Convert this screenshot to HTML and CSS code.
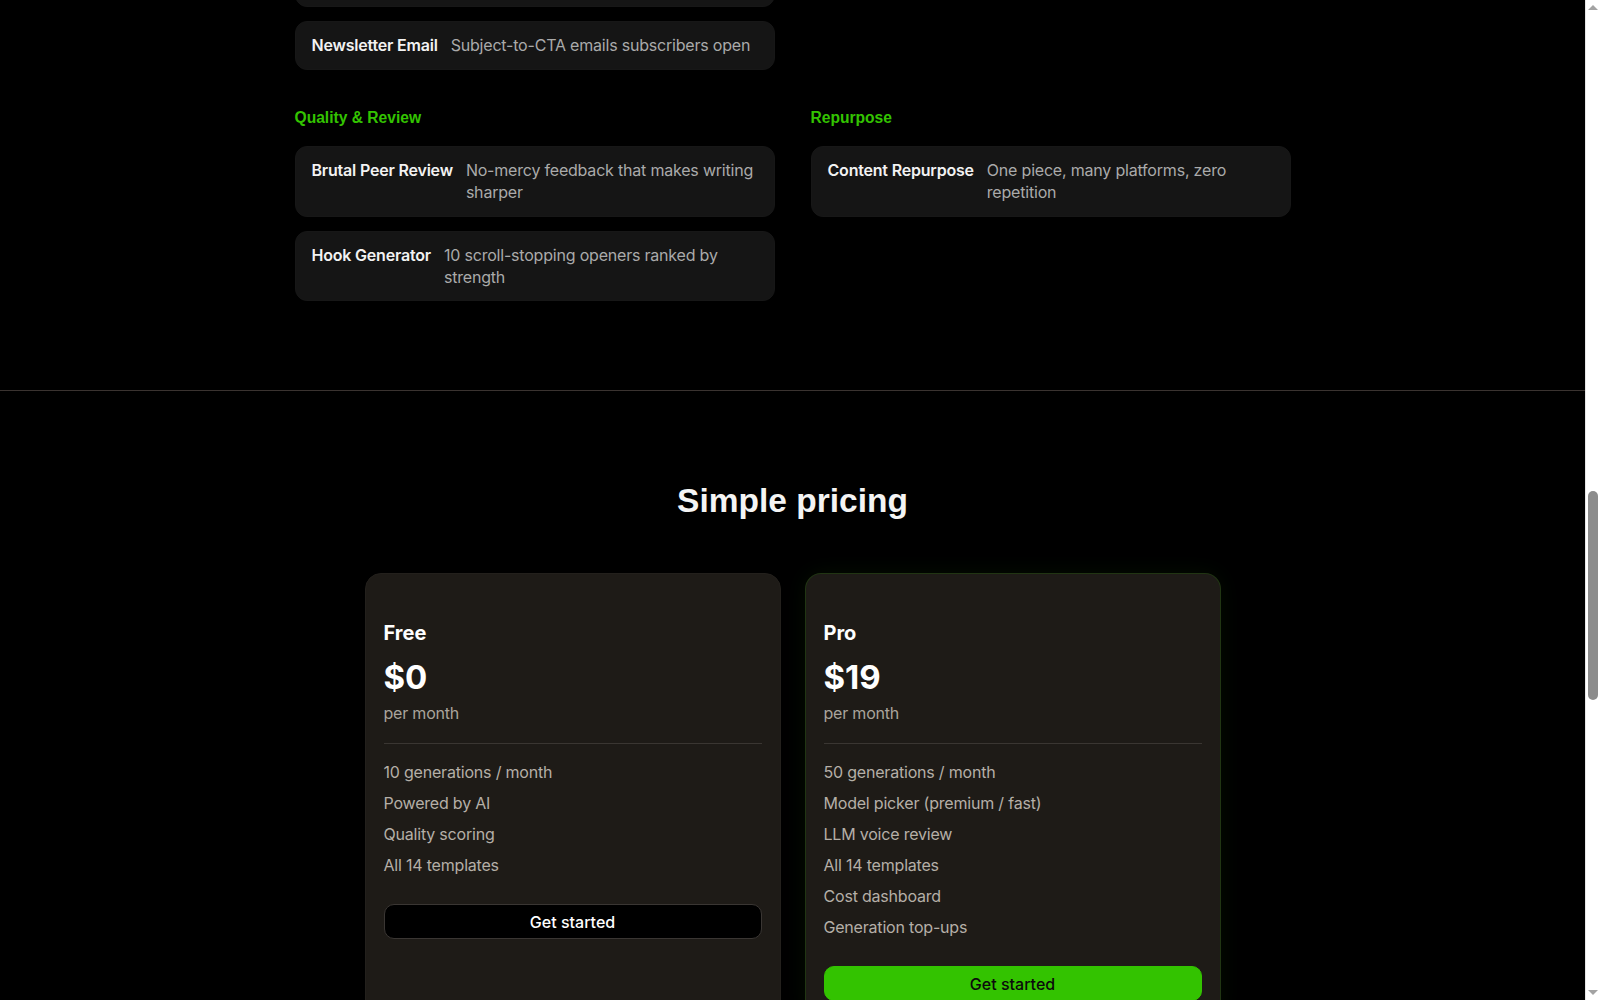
FILE: index.html
```html
<!DOCTYPE html>
<html lang="en">
<head>
<meta charset="utf-8">
<title>Templates and pricing</title>
<link rel="stylesheet" href="styles.css">
</head>
<body>
<section class="templates">
  <div class="groups">
    <div class="group">
      <div class="cards">
        <div class="card card-cut"><span class="card-title">&nbsp;</span></div>
        <div class="card">
          <span class="card-title">Newsletter Email</span>
          <span class="card-desc">Subject-to-CTA emails subscribers open</span>
        </div>
      </div>
    </div>
    <div class="group"></div>
    <div class="group">
      <h3 class="group-title">Quality &amp; Review</h3>
      <div class="cards">
        <div class="card">
          <span class="card-title">Brutal Peer Review</span>
          <span class="card-desc">No-mercy feedback that makes writing sharper</span>
        </div>
        <div class="card">
          <span class="card-title">Hook Generator</span>
          <span class="card-desc">10 scroll-stopping openers ranked by strength</span>
        </div>
      </div>
    </div>
    <div class="group">
      <h3 class="group-title">Repurpose</h3>
      <div class="cards">
        <div class="card">
          <span class="card-title">Content Repurpose</span>
          <span class="card-desc">One piece, many platforms, zero repetition</span>
        </div>
      </div>
    </div>
  </div>
</section>

<section class="pricing">
  <h2 class="pricing-title">Simple pricing</h2>
  <div class="plans">
    <div class="plan">
      <div class="plan-name">Free</div>
      <div class="plan-price">$0</div>
      <div class="plan-period">per month</div>
      <hr class="plan-rule">
      <ul class="plan-features">
        <li>10 generations / month</li>
        <li>Powered by AI</li>
        <li>Quality scoring</li>
        <li>All 14 templates</li>
      </ul>
      <a class="btn btn-dark" href="#">Get started</a>
    </div>
    <div class="plan plan-pro">
      <div class="plan-name">Pro</div>
      <div class="plan-price">$19</div>
      <div class="plan-period">per month</div>
      <hr class="plan-rule">
      <ul class="plan-features">
        <li>50 generations / month</li>
        <li>Model picker (premium / fast)</li>
        <li>LLM voice review</li>
        <li>All 14 templates</li>
        <li>Cost dashboard</li>
        <li>Generation top-ups</li>
      </ul>
      <a class="btn btn-green" href="#">Get started</a>
    </div>
  </div>
</section>

<div class="scrollbar" aria-hidden="true">
  <span class="sb-arrow sb-up"></span>
  <span class="sb-thumb"></span>
  <span class="sb-arrow sb-down"></span>
</div>
</body>
</html>
```

FILE: styles.css
```css
* { box-sizing: border-box; }

html, body {
  margin: 0;
  padding: 0;
  background: #000;
}

body {
  padding-right: 15px;
  font-family: Inter, "Noto Sans", "Liberation Sans", sans-serif;
  color: #f2f2f2;
}

/* ---------- templates ---------- */
.templates {
  padding: 0 0 89px;
}

.groups {
  width: 996px;
  margin: -41px auto 0;
  display: grid;
  grid-template-columns: 480px 480px;
  column-gap: 36px;
  row-gap: 36px;
}

.group-title {
  margin: 0 0 16px;
  font-family: "Liberation Sans", Arial, sans-serif;
  font-size: 15.6px;
  font-weight: 700;
  line-height: 24px;
  color: #33c300;
}

.cards {
  display: flex;
  flex-direction: column;
  gap: 14px;
}

.card {
  display: flex;
  align-items: flex-start;
  gap: 13px;
  padding: 12px 16px;
  background: #151515;
  border: 1px solid #171717;
  border-radius: 12px;
  font-size: 16px;
  line-height: 22.4px;
  letter-spacing: -0.2px;
}

.card-title {
  flex-shrink: 0;
  font-weight: 600;
  color: #f2f2f2;
}

.card-desc {
  color: #aaaaaa;
}

/* ---------- pricing ---------- */
.pricing {
  border-top: 1px solid #3a3330;
  padding: 91px 0 90px;
}

.pricing-title {
  margin: 0 0 53px;
  text-align: center;
  font-family: "Liberation Sans", Arial, sans-serif;
  font-size: 33.5px;
  font-weight: 700;
  line-height: 38px;
  color: #f4f4f4;
}

.plans {
  width: 856px;
  margin: 0 auto;
  display: grid;
  grid-template-columns: 416px 416px;
  column-gap: 24px;
}

.plan {
  display: flex;
  flex-direction: column;
  padding: 45px 18px 18px;
  background: #1e1b17;
  border: 1px solid #23201c;
  border-radius: 16px;
}

.plan-pro {
  border-color: rgba(51, 195, 0, 0.16);
  box-shadow: 0 0 22px rgba(51, 195, 0, 0.07);
}

.plan-name {
  font-size: 20px;
  font-weight: 700;
  line-height: 28px;
  color: #ffffff;
  margin-bottom: 11px;
}

.plan-price {
  font-size: 33px;
  font-weight: 700;
  line-height: 38px;
  color: #ffffff;
  margin-bottom: 5px;
}

.plan-period {
  font-size: 16px;
  line-height: 24px;
  letter-spacing: -0.2px;
  color: #aaa49c;
}

.plan-rule {
  margin: 18px 0 0;
  border: 0;
  height: 1px;
  background: #3a3632;
}

.plan-features {
  list-style: none;
  margin: 16px 0 0;
  padding: 0;
  display: flex;
  flex-direction: column;
  gap: 7px;
  font-size: 16px;
  line-height: 24px;
  letter-spacing: -0.2px;
  color: #b5afa7;
}

.btn {
  display: flex;
  align-items: center;
  justify-content: center;
  height: 35px;
  margin-top: 27px;
  border-radius: 10px;
  font-size: 16px;
  font-weight: 500;
  text-decoration: none;
}

.btn-dark {
  background: #000;
  border: 1px solid #3a3633;
  color: #ffffff;
}

.btn-green {
  background: #33c300;
  border: 1px solid #33c300;
  color: #0b0b0b;
}

/* ---------- window scrollbar ---------- */
.scrollbar {
  position: fixed;
  top: 0;
  right: 0;
  width: 15px;
  height: 100vh;
  background: #ffffff;
  border-left: 1px solid #e6e6e6;
}

.sb-thumb {
  position: absolute;
  top: 491px;
  left: 2px;
  width: 10px;
  height: 209px;
  border-radius: 5px;
  background: #8c8c8c;
}

.sb-arrow {
  position: absolute;
  left: 2px;
  width: 0;
  height: 0;
  border-left: 5px solid transparent;
  border-right: 5px solid transparent;
}

.sb-up {
  top: 5px;
  border-bottom: 5px solid #a3a3a3;
}

.sb-down {
  bottom: 5px;
  border-top: 5px solid #a3a3a3;
}
```
